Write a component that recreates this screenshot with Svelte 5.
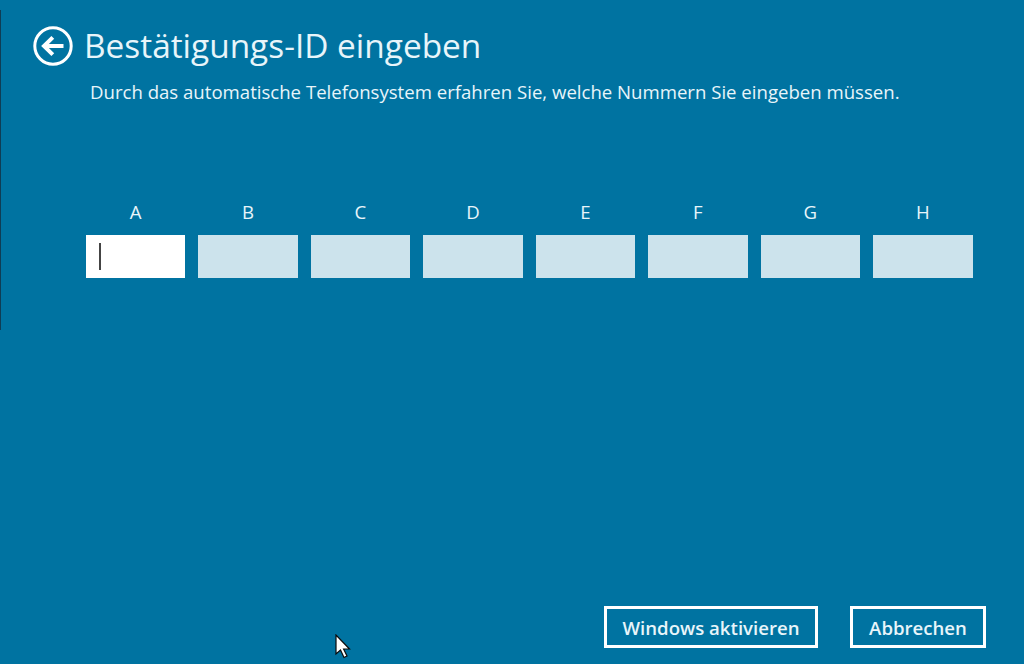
<script>
  const fields = ['A', 'B', 'C', 'D', 'E', 'F', 'G', 'H'];
</script>

<div class="page">
  <header class="head">
    <button class="back" aria-label="Zurück">
      <svg viewBox="0 0 40 40" width="40" height="40" aria-hidden="true">
        <circle cx="20" cy="20" r="18.2" fill="none" stroke="#fff" stroke-width="3" />
        <path d="M30.5 20H13" fill="none" stroke="#fff" stroke-width="4" />
        <path d="M19.8 11.4L11 20L19.8 28.6" fill="none" stroke="#fff" stroke-width="4" />
      </svg>
    </button>
    <h1>Bestätigungs-ID eingeben</h1>
  </header>
  <p class="sub">Durch das automatische Telefonsystem erfahren Sie, welche Nummern Sie eingeben müssen.</p>

  <div class="grid">
    {#each fields as f, i}
      <div class="cell">
        <span class="label">{f}</span>
        <div class="field" class:active={i === 0}>
          {#if i === 0}<span class="caret"></span>{/if}
        </div>
      </div>
    {/each}
  </div>

  <div class="actions">
    <button class="btn wide">Windows aktivieren</button>
    <button class="btn narrow">Abbrechen</button>
  </div>

  <div class="edge"></div>
  <svg class="cursor" viewBox="0 0 17 25" width="17" height="25" aria-hidden="true">
    <path d="M1 1V20L5.5 16L9 23.5L12 22L8.6 15H14.5Z" fill="#fff" stroke="#0b0b0b" stroke-width="1.2" />
  </svg>
</div>

<style>
  :global(body) {
    margin: 0;
    background: #0073a1;
  }
  .page {
    position: relative;
    box-sizing: border-box;
    width: 1024px;
    height: 664px;
    overflow: hidden;
    display: flex;
    flex-direction: column;
    background: #0073a1;
    color: #e8f5fa;
    font-family: "Open Sans", "Noto Sans", sans-serif;
  }
  .head {
    display: flex;
    align-items: center;
    gap: 11px;
    padding: 26px 0 0 33px;
    height: 40px;
  }
  .back {
    width: 40px;
    height: 40px;
    padding: 0;
    border: 0;
    background: none;
    display: block;
  }
  .back svg {
    display: block;
  }
  h1 {
    margin: 0;
    padding-bottom: 2px;
    font-size: 33.4px;
    font-weight: 400;
    line-height: 38px;
    white-space: nowrap;
  }
  .sub {
    margin: 13px 0 0 90px;
    font-size: 18.6px;
    line-height: 26px;
    white-space: nowrap;
  }
  .grid {
    display: grid;
    grid-template-columns: repeat(8, 1fr);
    column-gap: 12.8px;
    width: 887px;
    margin: 95px 0 0 85.7px;
  }
  .cell {
    display: flex;
    flex-direction: column;
    align-items: center;
    gap: 11px;
  }
  .label {
    font-size: 18.6px;
    line-height: 24px;
  }
  .field {
    box-sizing: border-box;
    width: 100%;
    height: 43px;
    background: #cce3ec;
    display: flex;
    align-items: center;
    padding-left: 13px;
  }
  .field.active {
    background: #fff;
  }
  .caret {
    width: 2px;
    height: 27px;
    background: #444;
  }
  .actions {
    margin-top: auto;
    display: flex;
    justify-content: flex-end;
    gap: 32px;
    padding: 0 38px 16px 0;
  }
  .btn {
    box-sizing: border-box;
    height: 42px;
    border: 3px solid #fff;
    background: transparent;
    color: #e8f5fa;
    font-family: inherit;
    font-size: 18.6px;
    font-weight: 600;
    padding: 0;
    white-space: nowrap;
  }
  .wide {
    width: 214px;
  }
  .narrow {
    width: 136px;
  }
  .edge {
    position: absolute;
    left: 0;
    top: 10px;
    width: 1px;
    height: 320px;
    background: #0f3d55;
  }
  .cursor {
    position: absolute;
    left: 335px;
    top: 634px;
  }
</style>
